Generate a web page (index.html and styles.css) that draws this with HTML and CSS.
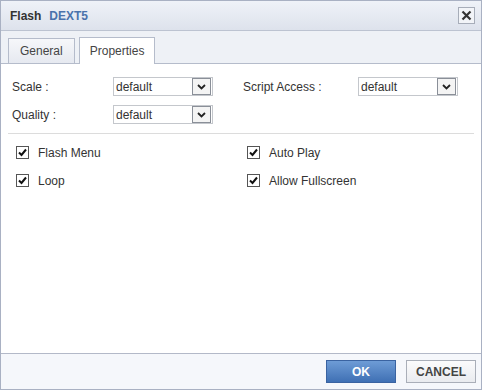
FILE: index.html
```html
<!DOCTYPE html>
<html lang="en">
<head>
    <meta charset="UTF-8">
    <title>Flash - DEXT5</title>
    <link rel="stylesheet" href="styles.css">
</head>
<body>
    <div class="dialog">
        <div class="header">
            <span class="title">Flash</span>
            <span class="brand">DEXT5</span>
            <span class="close">
                <svg width="11" height="11" viewBox="0 0 11 11"><path d="M1.5 1.5 L9.5 9.5 M9.5 1.5 L1.5 9.5" stroke="#333" stroke-width="2.2"/></svg>
            </span>
        </div>

        <div class="tabs">
            <div class="tab">General</div>
            <div class="tab active">Properties</div>
        </div>

        <div class="body">
            <div class="fields">
                <label>Scale :</label>
                <div class="select"><span>default</span><span class="arrow"><svg width="9" height="6" viewBox="0 0 9 6"><path d="M1 1 L4.5 4.5 L8 1" fill="none" stroke="#222" stroke-width="1.8"/></svg></span></div>
                <span></span>
                <label>Script Access :</label>
                <div class="select"><span>default</span><span class="arrow"><svg width="9" height="6" viewBox="0 0 9 6"><path d="M1 1 L4.5 4.5 L8 1" fill="none" stroke="#222" stroke-width="1.8"/></svg></span></div>

                <label>Quality :</label>
                <div class="select"><span>default</span><span class="arrow"><svg width="9" height="6" viewBox="0 0 9 6"><path d="M1 1 L4.5 4.5 L8 1" fill="none" stroke="#222" stroke-width="1.8"/></svg></span></div>
            </div>

            <hr class="divider">

            <div class="checks">
                <div class="check"><span class="box"><svg width="11" height="11" viewBox="0 0 11 11"><path d="M2 5.5 L4.5 8 L9 2.5" fill="none" stroke="#111" stroke-width="2"/></svg></span>Flash Menu</div>
                <div class="check"><span class="box"><svg width="11" height="11" viewBox="0 0 11 11"><path d="M2 5.5 L4.5 8 L9 2.5" fill="none" stroke="#111" stroke-width="2"/></svg></span>Auto Play</div>
                <div class="check"><span class="box"><svg width="11" height="11" viewBox="0 0 11 11"><path d="M2 5.5 L4.5 8 L9 2.5" fill="none" stroke="#111" stroke-width="2"/></svg></span>Loop</div>
                <div class="check"><span class="box"><svg width="11" height="11" viewBox="0 0 11 11"><path d="M2 5.5 L4.5 8 L9 2.5" fill="none" stroke="#111" stroke-width="2"/></svg></span>Allow Fullscreen</div>
            </div>
        </div>

        <div class="footer">
            <button class="btn ok">OK</button>
            <button class="btn cancel">CANCEL</button>
        </div>
    </div>
</body>
</html>
```

FILE: styles.css
```css
body {
    margin: 0;
    font-family: "Liberation Sans", Arial, sans-serif;
    font-size: 12px;
    color: #333;
}
.dialog {
    width: 482px;
    height: 390px;
    box-sizing: border-box;
    border: 1px solid #a9b1c3;
    display: flex;
    flex-direction: column;
    background-color: #fff;
}
.header {
    height: 29px;
    border-bottom: 1px solid #bcc3d1;
    background: linear-gradient(#eff2f8, #dde2ec);
    display: flex;
    align-items: center;
    padding-left: 9px;
    font-weight: bold;
}
.title {
    color: #333;
}
.brand {
    color: #4a72ab;
    margin-left: 8px;
}
.close {
    margin-left: auto;
    margin-right: 6px;
    width: 15px;
    height: 15px;
    border: 1px solid #a7adb9;
    background-color: #f2f4f8;
    display: flex;
    align-items: center;
    justify-content: center;
}
.tabs {
    height: 26px;
    padding: 6px 0 0 7px;
    background-color: #eef1f6;
    border-bottom: 1px solid #b5bccb;
    display: flex;
    align-items: flex-end;
    gap: 4px;
}
.tab {
    height: 25px;
    box-sizing: border-box;
    border: 1px solid #b5bccb;
    border-bottom: none;
    background: linear-gradient(#f6f7fa, #e6e9f0);
    padding: 0 11px;
    display: flex;
    align-items: center;
    color: #444;
}
.tab.active {
    height: 27px;
    background: #fff;
    padding: 0 10px;
    margin-bottom: -1px;
}
.body {
    flex: 1;
    padding: 13px 7px 0 7px;
}
.fields {
    display: grid;
    grid-template-columns: 101px 100px 30px 115px 100px;
    row-gap: 9px;
    padding-left: 4px;
    align-items: center;
}
.select {
    height: 19px;
    box-sizing: border-box;
    border: 1px solid #c4c7cc;
    display: flex;
    align-items: center;
    justify-content: space-between;
    padding-left: 2px;
}
.arrow {
    width: 17px;
    height: 15px;
    border: 1px solid #8a8f98;
    background-color: #f4f4f4;
    margin-right: 1px;
    display: flex;
    align-items: center;
    justify-content: center;
}
.divider {
    border: none;
    border-top: 1px solid #dcdcdc;
    margin: 9px 0 0 0;
}
.checks {
    display: grid;
    grid-template-columns: 231px 1fr;
    row-gap: 15px;
    padding: 12px 0 0 8px;
}
.check {
    display: flex;
    align-items: center;
    height: 13px;
}
.box {
    width: 11px;
    height: 11px;
    border: 1px solid #555;
    background-color: #fff;
    margin-right: 9px;
    display: flex;
}
.footer {
    height: 35px;
    border-top: 1px solid #b3b9c8;
    background-color: #f5f7fb;
    display: flex;
    align-items: center;
    justify-content: flex-end;
    gap: 10px;
    padding-right: 5px;
}
.btn {
    width: 70px;
    height: 23px;
    font-family: "Liberation Sans", Arial, sans-serif;
    font-size: 12px;
    font-weight: bold;
    padding: 0;
}
.ok {
    color: #fff;
    border: 1px solid #3a63a1;
    background: linear-gradient(#6e9cd6, #3f70b4);
}
.cancel {
    color: #444;
    border: 1px solid #a9aeb8;
    background: linear-gradient(#fbfbfc, #e9ebef);
}
```
